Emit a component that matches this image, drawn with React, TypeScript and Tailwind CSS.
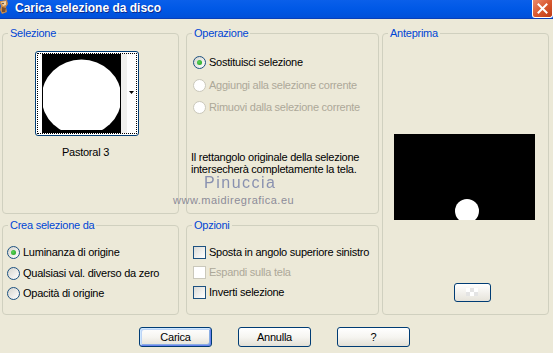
import React from "react";

function Radio({ checked, disabled }: { checked?: boolean; disabled?: boolean }) {
  return (
    <span
      className={
        disabled
          ? "w-[13px] h-[13px] rounded-full border border-[#CAC8BB] bg-white shrink-0 flex items-center justify-center"
          : "w-[13px] h-[13px] rounded-full border border-[#1C5180] bg-gradient-to-br from-[#D6D5CE] to-white shrink-0 flex items-center justify-center"
      }
    >
      {checked && (
        <span className="w-[5px] h-[5px] rounded-full bg-[radial-gradient(circle_at_40%_40%,#5BD55B,#1A9A1A)]" />
      )}
    </span>
  );
}

function Check({ disabled }: { disabled?: boolean }) {
  return (
    <span
      className={
        disabled
          ? "w-[13px] h-[13px] border border-[#CAC8BB] bg-white shrink-0"
          : "w-[13px] h-[13px] border border-[#1C5180] bg-gradient-to-br from-[#DCDCD7] to-white shrink-0"
      }
    />
  );
}

function XPButton({ label, isDefault }: { label: string; isDefault?: boolean }) {
  return (
    <div
      className={
        isDefault
          ? "w-[73px] h-[20px] rounded-[3px] border border-[#003C74] bg-gradient-to-b from-white via-[#F6F5F1] to-[#E3E0D6] flex items-center justify-center text-black shadow-[inset_1px_1px_0_#CEE7FF,inset_-1px_-1px_0_#6982EE,inset_2px_2px_0_#BCD4F6,inset_-2px_-2px_0_#89ADE4]"
          : "w-[73px] h-[20px] rounded-[3px] border border-[#003C74] bg-gradient-to-b from-white via-[#F6F5F1] to-[#E3E0D6] flex items-center justify-center text-black"
      }
    >
      {label}
    </div>
  );
}

function Legend({ children }: { children: React.ReactNode }) {
  return (
    <legend className="ml-[5px] px-[2px] leading-[13px] text-[#0046D5]">{children}</legend>
  );
}

export default function App() {
  return (
    <div className="relative w-[553px] h-[353px] overflow-hidden bg-[#ECE9D8] font-['Liberation_Sans',Arial,sans-serif] text-[11px] leading-[13px] tracking-[-0.25px] text-black">
      {/* Title bar */}
      <div className="h-[19px] flex items-start bg-gradient-to-b from-[#0A5FEA] via-[#0058E6] to-[#0150D9] border-b border-[#0A3FB8]">
        <svg width="12" height="15" viewBox="0 0 12 15" className="ml-[-2px] shrink-0">
          <path d="M1 1 L9 0 L10 4 L8 7 L9 12 L4 14 L2 10 L3 6 Z" fill="#C98B4B" />
          <path d="M3 2 L8 1 L8 5 L5 6 Z" fill="#F2D3A8" />
          <path d="M4 7 L8 8 L7 12 L4 12 Z" fill="#7A5030" />
          <circle cx="5" cy="3.5" r="0.8" fill="#333" />
        </svg>
        <span className="ml-[5px] mt-[1px] text-white font-bold text-[12px] leading-[15px] tracking-normal [text-shadow:1px_1px_0_#0C2A8C]">
          Carica selezione da disco
        </span>
        <div className="ml-auto mr-[0px] w-[21px] h-[18px] rounded-b-[3px] border border-t-0 border-white bg-gradient-to-br from-[#EC8A6B] via-[#D9582F] to-[#BE3A14] flex items-center justify-center">
          <svg width="11" height="11" viewBox="0 0 11 11">
            <path d="M1.5 1.5 L9.5 9.5 M9.5 1.5 L1.5 9.5" stroke="white" strokeWidth="2" strokeLinecap="square" />
          </svg>
        </div>
      </div>

      {/* Groups */}
      <div className="mt-[8px] ml-[2px] grid grid-cols-[177px_197px_167px] grid-rows-[187px_96px] gap-x-[3px] gap-y-[5px]">
        {/* Selezione */}
        <fieldset className="col-start-1 row-start-1 border border-[#D0D0BF] rounded-[4px] min-w-0">
          <Legend>Selezione</Legend>
          <div className="ml-[32px] mt-[11px] w-[104px] flex flex-col items-center">
            <div className="w-[104px] h-[85px] rounded-[3px] border border-[#003C74] bg-white p-[1px]">
              <div className="relative w-full h-full border border-dotted border-black flex items-start">
                <svg width="79" height="79" viewBox="0 0 79 79" className="ml-[4px] mt-[0px]">
                  <defs>
                    <clipPath id="selclip">
                      <rect x="1" y="0" width="77" height="76" />
                    </clipPath>
                    <filter id="soft" x="-10%" y="-10%" width="120%" height="120%">
                      <feGaussianBlur stdDeviation="0.6" />
                    </filter>
                  </defs>
                  <rect width="79" height="79" fill="#000" />
                  <g clipPath="url(#selclip)">
                    <ellipse cx="39.5" cy="43.5" rx="40" ry="38" fill="#fff" filter="url(#soft)" />
                  </g>
                </svg>
                <div className="w-[6px] h-[79px] bg-[#F0F0EE]" />
                <svg width="6" height="4" viewBox="0 0 6 4" className="ml-[2px] mt-[37px]">
                  <path d="M0 0 L5 0 L2.5 3 Z" fill="#000" />
                </svg>
              </div>
            </div>
            <div className="mt-[10px] mr-[3px]">Pastoral 3</div>
          </div>
        </fieldset>

        {/* Operazione */}
        <fieldset className="col-start-2 row-start-1 ml-[4px] border border-[#D0D0BF] rounded-[4px] min-w-0">
          <Legend>Operazione</Legend>
          <div className="ml-[6px] mt-[16px] h-[13px] flex items-center gap-[3px]">
            <Radio checked />
            <span>Sostituisci selezione</span>
          </div>
          <div className="ml-[6px] mt-[10px] h-[13px] flex items-center gap-[3px] text-[#ACA899]">
            <Radio disabled />
            <span>Aggiungi alla selezione corrente</span>
          </div>
          <div className="ml-[6px] mt-[9px] h-[13px] flex items-center gap-[3px] text-[#ACA899]">
            <Radio disabled />
            <span>Rimuovi dalla selezione corrente</span>
          </div>
          <p className="ml-[4px] mt-[37px] leading-[12px]">
            Il rettangolo originale della selezione
            <br />
            intersecherà completamente la tela.
          </p>
        </fieldset>

        {/* Anteprima */}
        <fieldset className="col-start-3 row-start-1 row-span-2 border border-[#D0D0BF] rounded-[4px] min-w-0">
          <Legend>Anteprima</Legend>
          <svg width="141" height="86" viewBox="0 0 141 86" className="ml-[11px] mt-[94px] block">
            <rect width="141" height="86" fill="#000" />
            <circle cx="73" cy="77" r="12" fill="#fff" />
          </svg>
          <div className="ml-[71px] mt-[63px] w-[37px] h-[19px] rounded-[3px] border border-[#003C74] bg-gradient-to-b from-white to-[#E6E3DA] flex items-center justify-center">
            <svg width="14" height="10" viewBox="0 0 14 10">
              <rect x="0" y="0" width="4" height="4" fill="#FFFFFF" />
              <rect x="4" y="0" width="4" height="4" fill="#E4E4E4" />
              <rect x="8" y="0" width="4" height="4" fill="#FFFFFF" />
              <rect x="0" y="4" width="4" height="4" fill="#E4E4E4" />
              <rect x="4" y="4" width="4" height="4" fill="#FFFFFF" />
              <rect x="8" y="4" width="4" height="4" fill="#E4E4E4" />
            </svg>
          </div>
        </fieldset>

        {/* Crea selezione da */}
        <fieldset className="col-start-1 row-start-2 border border-[#D0D0BF] rounded-[4px] min-w-0">
          <Legend>Crea selezione da</Legend>
          <div className="ml-[4px] mt-[14px] h-[13px] flex items-center gap-[3px]">
            <Radio checked />
            <span>Luminanza di origine</span>
          </div>
          <div className="ml-[4px] mt-[8px] h-[13px] flex items-center gap-[3px]">
            <Radio />
            <span>Qualsiasi val. diverso da zero</span>
          </div>
          <div className="ml-[4px] mt-[7px] h-[13px] flex items-center gap-[3px]">
            <Radio />
            <span>Opacità di origine</span>
          </div>
        </fieldset>

        {/* Opzioni */}
        <fieldset className="col-start-2 row-start-2 ml-[4px] border border-[#D0D0BF] rounded-[4px] min-w-0">
          <Legend>Opzioni</Legend>
          <div className="ml-[6px] mt-[14px] h-[13px] flex items-center gap-[3px]">
            <Check />
            <span>Sposta in angolo superiore sinistro</span>
          </div>
          <div className="ml-[6px] mt-[7px] h-[13px] flex items-center gap-[3px] text-[#ACA899]">
            <Check disabled />
            <span>Espandi sulla tela</span>
          </div>
          <div className="ml-[6px] mt-[7px] h-[13px] flex items-center gap-[3px]">
            <Check />
            <span>Inverti selezione</span>
          </div>
        </fieldset>
      </div>

      {/* Buttons */}
      <div className="mt-[12px] pl-[139px] flex gap-[26px]">
        <XPButton label="Carica" isDefault />
        <XPButton label="Annulla" />
        <XPButton label="?" />
      </div>

      {/* Watermark */}
      <div className="absolute left-[204px] top-[176px] text-[16px] leading-[14px] tracking-[1.5px] text-[#7F88AC] opacity-90">
        Pinuccia
      </div>
      <div className="absolute left-[173px] top-[194px] text-[11px] leading-[12px] tracking-[0.5px] text-[#8C8C98]">
        www.maidiregrafica.eu
      </div>
    </div>
  );
}
